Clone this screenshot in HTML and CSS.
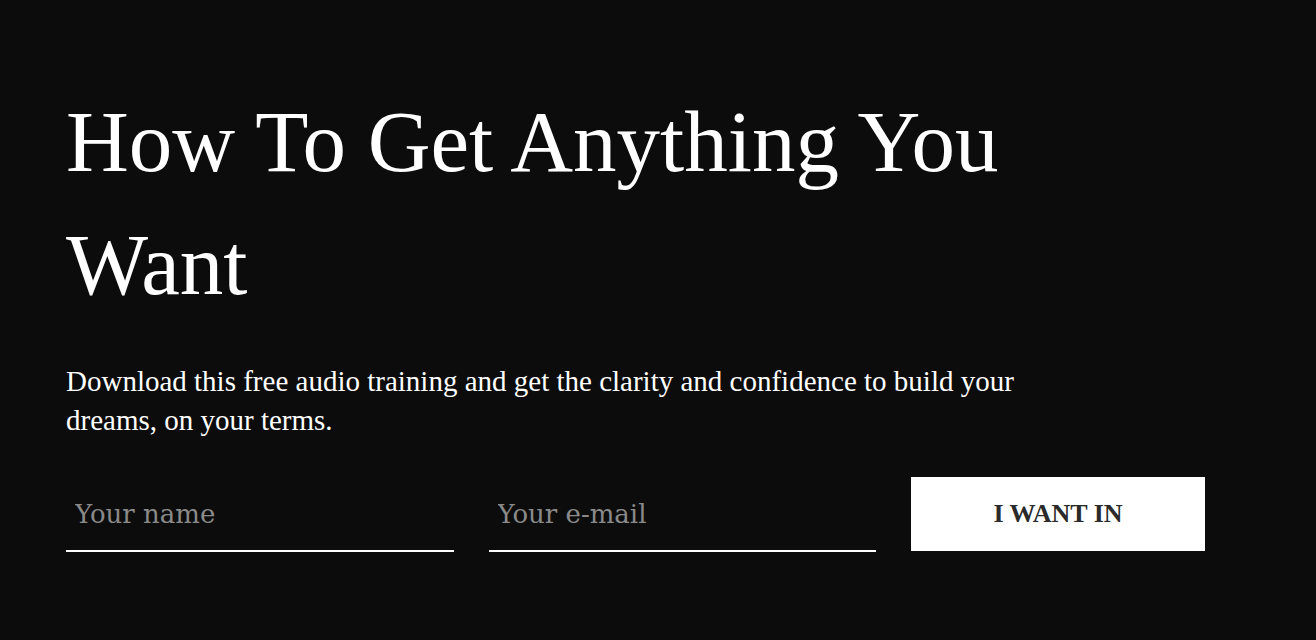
FILE: index.html
```
<!DOCTYPE html>
<html lang="en">
  <head>
    <meta charset="UTF-8" />
    <meta name="viewport" content="width=device-width, initial-scale=1.0" />
    <title>How To Get Anything You Want</title>
    <link rel="stylesheet" href="styles.css">
  </head>
  <body>
    <section class="optin">
      <div class="intro">
        <h1>How To Get Anything You Want</h1>
        <p>
          Download this free audio training and get the clarity and confidence
          to build your dreams, on your terms.
        </p>
      </div>

      <form class="signup">
        <input type="text" name="name" placeholder="Your name" aria-label="Your name" />
        <input type="email" name="email" placeholder="Your e-mail" aria-label="Your e-mail" />
        <button type="submit">I WANT IN</button>
      </form>
    </section>
  </body>
</html>
```
FILE: styles.css
```
* {
  margin: 0;
  padding: 0;
  box-sizing: border-box;
}

body {
  min-height: 100vh;
  background: #0c0c0c;
  color: #fff;
  font-family: "Liberation Serif", "Times New Roman", serif;
}

.optin {
  padding: 80px 111px 80px 66px;
}

.intro {
  max-width: 960px;
}

h1 {
  margin-bottom: 36px;
  font-size: 87px;
  font-weight: 400;
  line-height: 123px;
}

p {
  font-size: 29px;
  line-height: 39px;
}

.signup {
  display: grid;
  grid-template-columns: 29fr 29fr 22fr;
  gap: 35px;
  margin-top: 37px;
}

.signup input {
  min-width: 0;
  height: 75px;
  padding: 0 9px;
  border: none;
  border-bottom: 2px solid #fff;
  background: transparent;
  color: #fff;
  font-family: "DejaVu Serif", serif;
  font-size: 26px;
}

.signup input::placeholder {
  color: #8a8a8a;
  opacity: 1;
}

.signup button {
  height: 74px;
  border: none;
  background: #fff;
  color: #2a2a2a;
  font-family: inherit;
  font-size: 26px;
  font-weight: 700;
  cursor: pointer;
}

@media (max-width: 768px) {
  .optin {
    padding: 48px 24px;
  }

  h1 {
    font-size: 48px;
    line-height: 64px;
  }

  .signup {
    grid-template-columns: 1fr;
  }
}
```
